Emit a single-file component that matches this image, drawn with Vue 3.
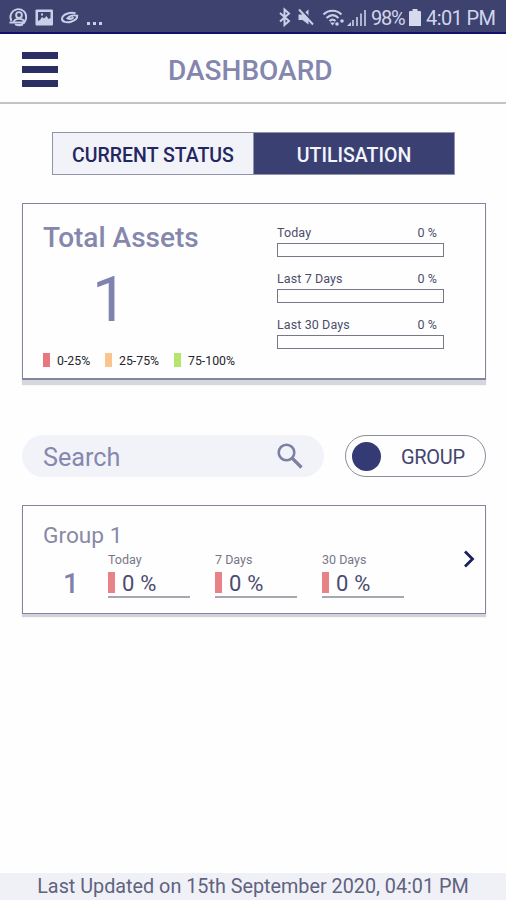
<script setup>
const periods = ['Today', 'Last 7 Days', 'Last 30 Days']
const legend = [
  { label: '0-25%', tone: 'red' },
  { label: '25-75%', tone: 'orange' },
  { label: '75-100%', tone: 'green' }
]
const stats = ['Today', '7 Days', '30 Days']
</script>

<template>
  <div class="screen">
    <div class="status">
      <div class="status-left">
        <svg width="84" height="24" viewBox="0 0 84 24" fill="none" stroke="#c9cfe9">
          <path d="M11.500 16A7.900 7.900 0 1 1 15 19.200M15 19.200q4 2.200 8 .3" stroke-width="1.800" />
          <circle cx="19" cy="10" r="2.900" stroke-width="1.900" />
          <path d="M13.800 17.500c0-2.500 2-3.700 5.200-3.700s5.200 1.200 5.200 3.700zM9.500 17.500h4" stroke-width="1.800" />
          <rect x="35.500" y="4.500" width="17.500" height="16" rx="1" fill="#c9cfe9" stroke="none" />
          <path d="M38 7h12.500v6l-2 1-2-3-2.500 2.500-2-1.500-2 3-2 1z" fill="#3d426f" stroke="none" />
          <path d="M41 8.500h2v2h-2z" fill="#c9cfe9" stroke="none" />
          <path d="M75.500 8.200C70 6.500 62.500 9.500 62 13.500c-.3 3.200 4.500 4.600 9 3.200 4-1.200 6.500-3.700 6.200-6-3.700-.8-8 .2-9.700 2.600 2 .9 4.500.4 6-1" stroke-width="2" />
        </svg>
        <span class="dots"><i></i><i></i><i></i></span>
      </div>
      <div class="status-right">
        <svg width="92" height="24" viewBox="0 0 92 24" fill="none" stroke="#c9cfe9">
          <path d="M3 8l9 8-4.500 4V4.500L12 8.500l-9 8" stroke-width="2" />
          <path d="M21.500 9.500h4l6-5v15l-6-4.500h-4z" fill="#c9cfe9" stroke="none" />
          <path d="M23.500 3.500l14 15" stroke="#3d426f" stroke-width="2" />
          <path d="M22 4.500l14 15" stroke-width="2" />
          <path d="M46.500 9.500c5-5 13-5 18 0M49.500 13c4-3.600 8.500-3.600 12 0M52.500 16c2-1.800 4-1.800 6 0" stroke-width="2" />
          <path d="M55.500 20.500l-2.500-3h5z" fill="#c9cfe9" stroke="none" />
          <circle cx="60" cy="19" r="1.800" fill="#c9cfe9" stroke="none" />
          <circle cx="65" cy="16" r="1.800" fill="#c9cfe9" stroke="none" />
          <path d="M70 21l4-4v4z" fill="#c9cfe9" stroke="none" />
          <path d="M77 21v-6M81 21v-9M85 21V8.500M89 21V5" stroke-width="2" opacity=".8" transform="translate(-1 0)" />
        </svg>
        <span class="pct">98%</span>
        <svg class="battery" width="12" height="18" viewBox="0 0 12 18">
          <path d="M3.500 0h5v2H11q1 0 1 1v14H0V3q0-1 1-1h2.500z" fill="#d5daef" />
        </svg>
        <span class="clock">4:01 PM</span>
      </div>
    </div>

    <header class="header">
      <div class="menu"><i></i><i></i><i></i></div>
      <h1>DASHBOARD</h1>
    </header>

    <main>
      <div class="tabs">
        <div class="tab"><span>CURRENT STATUS</span></div>
        <div class="tab active"><span>UTILISATION</span></div>
      </div>

      <section class="card assets">
        <div class="summary">
          <h2>Total Assets</h2>
          <div class="total">1</div>
          <div class="legend">
            <div v-for="l in legend" :key="l.label" class="legend-item">
              <i :class="l.tone"></i><span>{{ l.label }}</span>
            </div>
          </div>
        </div>
        <div class="bars">
          <div v-for="p in periods" :key="p" class="period">
            <div class="period-head"><span>{{ p }}</span><span class="value">0 %</span></div>
            <div class="track"></div>
          </div>
        </div>
      </section>

      <div class="tools">
        <div class="search">
          <span>Search</span>
          <svg width="28" height="28" viewBox="0 0 28 28" fill="none" stroke="#7d80a6">
            <circle cx="10.500" cy="10.500" r="7.800" stroke-width="2.600" />
            <path d="M16 16l9.500 9.500" stroke-width="3.200" />
          </svg>
        </div>
        <div class="toggle"><i></i><span>GROUP</span></div>
      </div>

      <section class="card group">
        <div class="group-name">Group 1</div>
        <div class="group-row">
          <div class="count">1</div>
          <div v-for="s in stats" :key="s" class="stat">
            <div class="stat-label">{{ s }}</div>
            <div class="stat-value"><i></i><span>0 %</span></div>
          </div>
        </div>
        <svg class="chevron" width="12" height="18" viewBox="0 0 12 18" fill="none">
          <path d="M2 1.500L9.500 9 2 16.500" stroke="#1b1f5c" stroke-width="2.800" />
        </svg>
      </section>
    </main>

    <footer><span>Last Updated on 15th September 2020, 04:01 PM</span></footer>
  </div>
</template>

<style>
body { background: #fefefe; }
</style>

<style scoped>
* { box-sizing: border-box; }
.screen {
  width: 506px; height: 900px; display: flex; flex-direction: column; overflow: hidden;
  background: #fefefe; font-family: Roboto, sans-serif; color: #3d426f; white-space: nowrap;
}
i { display: block; flex: none; }
svg { display: block; flex: none; }
h1, h2 { margin: 0; font-weight: 500; }
.status {
  height: 34px; flex: none; display: flex; justify-content: space-between;
  background: #3d426f; border-bottom: 2px solid #11116a; color: #d0d5ec; padding-top: 5px;
}
.status-left, .status-right { display: flex; }
.dots { display: flex; gap: 3px; padding: 17px 0 0 3px; }
.dots i { width: 3px; height: 3px; background: #c9cfe9; }
.status-right { width: 229px; }
.pct, .clock { font-size: 20px; line-height: 26px; }
.pct { width: 39px; letter-spacing: -1.300px; margin-left: 2px; }
.battery { margin: 4px 5px 0 -1px; }
.clock { letter-spacing: -.6px; }
.header {
  height: 70px; flex: none; display: flex; border-bottom: 2px solid #c3c4c8; padding: 18px 0 0 22px;
}
.menu { width: 36px; display: flex; flex-direction: column; gap: 7px; }
.menu i { height: 7px; background: #2a2e63; }
h1 { margin-left: 110px; font-size: 28px; line-height: 38px; color: #8486ad; }
main { flex: 1; padding: 28px 20px 0 22px; }
.tabs { display: flex; width: 403px; height: 43px; margin-left: 30px; border: 1px solid #9293ab; }
.tab {
  flex: 1; display: flex; align-items: center; justify-content: center; padding-top: 3px;
  background: #f1f3f9; color: #23265f; font-size: 19.500px; font-weight: 500;
}
.tab.active { background: #3b4073; color: #f4f5ff; border-left: 1px solid #9293ab; }
.card { border: 1px solid #83849f; background: #fefefe; }
.assets {
  height: 177px; margin-top: 28px; display: flex; padding: 18px 0 0 20px;
  border-bottom-width: 2px; box-shadow: 0 5px 1px #d6d6dd;
}
.summary { width: 234px; }
h2 { font-size: 28px; line-height: 32px; color: #8587ac; }
.total { font-size: 63px; line-height: 62px; margin-top: 15px; padding-left: 49px; color: #7f83b0; }
.legend { display: flex; margin-top: 22px; font-size: 12.300px; line-height: 15px; color: #25252c; }
.legend-item { display: flex; }
.legend-item:nth-child(1) { width: 62px; }
.legend-item:nth-child(2) { width: 69px; }
.legend-item i { width: 7px; height: 14px; margin-right: 7px; }
.legend-item span { padding-top: 1px; }
.red { background: #e87780; }
.orange { background: #f9c58c; }
.green { background: #b5e56b; }
.bars { width: 167px; padding-top: 3px; }
.period { height: 46px; }
.period-head { height: 18px; display: flex; justify-content: space-between; padding-right: 7px; font-size: 12.500px; line-height: 15px; color: #4c4d6b; letter-spacing: .1px; }
.track { height: 14px; border: 1px solid #777785; }
.tools { display: flex; justify-content: space-between; margin-top: 55px; height: 42px; }
.search {
  width: 302px; border-radius: 21px; background: #f1f3f9; display: flex;
  align-items: center; justify-content: space-between; padding: 0 20px 0 21px; color: #8688ad;
}
.search span { font-size: 25.200px; line-height: 42px; padding-top: 4px; }
.toggle { width: 141px; border: 1px solid #8b8c9c; border-radius: 21px; display: flex; align-items: center; padding-left: 6px; }
.toggle i { width: 29px; height: 29px; border-radius: 50%; background: #343a73; }
.toggle span { margin-left: 20px; padding-top: 1px; font-size: 20px; letter-spacing: -.3px; color: #43466f; }
.group {
  position: relative; height: 109px; margin-top: 28px; padding: 17px 0 0 20px;
  box-shadow: 0 3px 1px #d2d2da;
}
.group-name { font-size: 22.700px; line-height: 26px; margin-bottom: 1px; color: #8889a6; }
.group-row { display: flex; }
.count { width: 65px; padding: 18px 0 0 20px; font-size: 28px; line-height: 32px; font-weight: 500; color: #7f83ac; }
.stat { width: 82px; margin-right: 25px; }
.stat-label { font-size: 12.500px; line-height: 14px; padding-top: 3px; height: 21px; color: #777887; }
.stat-value { display: flex; height: 27px; border-bottom: 2px solid #a6a7b0; padding-top: 1px; }
.stat-value i { width: 7px; height: 21px; background: #e98286; margin-right: 7px; }
.stat-value span { font-size: 22px; line-height: 24px; color: #4a4c70; letter-spacing: .2px; }
.chevron { position: absolute; left: 440px; top: 44px; }
footer {
  height: 27px; flex: none; background: #f0f1f6; color: #60627f; font-size: 19.800px;
  line-height: 28px; text-align: center;
}
</style>
